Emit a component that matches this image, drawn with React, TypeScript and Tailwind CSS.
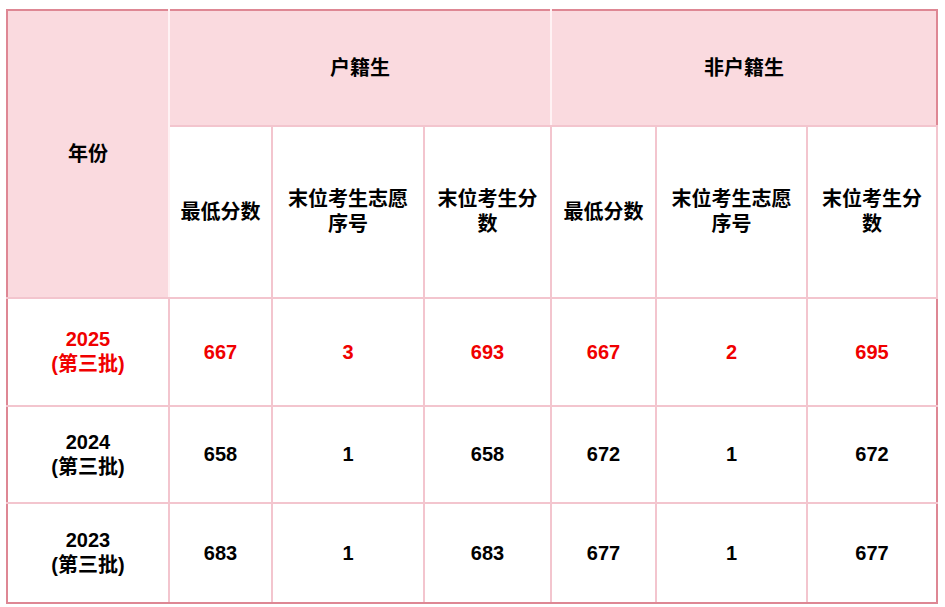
import React from "react";

const font = { fontFamily: '"Liberation Sans", Arial, "Noto Sans CJK SC", sans-serif' };

type Row = { year: string; vals: string[]; red?: boolean };

const rows: Row[] = [
  { year: "2025", vals: ["667", "3", "693", "667", "2", "695"], red: true },
  { year: "2024", vals: ["658", "1", "658", "672", "1", "672"] },
  { year: "2023", vals: ["683", "1", "683", "677", "1", "677"] },
];

const sub = ["最低分数", "末位考生志愿序号", "末位考生分数", "最低分数", "末位考生志愿序号", "末位考生分数"];

export default function App() {
  return (
    <div className="bg-white w-[945px] h-[607px] pt-[9px] pl-[6px]" style={font}>
      <table className="table-fixed border-collapse border-2 border-[#de8794] text-[20px] font-bold leading-[25px] text-black text-center w-[930px]">
        <colgroup>
          <col className="w-[162px]" />
          <col className="w-[103px]" />
          <col className="w-[152px]" />
          <col className="w-[127px]" />
          <col className="w-[105px]" />
          <col className="w-[151px]" />
          <col className="w-[130px]" />
        </colgroup>
        <tbody>
          <tr className="h-[116px] bg-[#fadadf]">
            <td rowSpan={2} className="bg-[#fadadf] border-2 border-[#f3c5ce] border-t-[#de8794] border-l-[#de8794] border-r-[#fff2f4] align-middle">
              年份
            </td>
            <td colSpan={3} className="border-2 border-[#f3c5ce] border-t-[#de8794] border-l-[#fff2f4] border-r-[#fff2f4]">
              户籍生
            </td>
            <td colSpan={3} className="border-2 border-[#f3c5ce] border-t-[#de8794] border-l-[#fff2f4] border-r-[#de8794]">
              非户籍生
            </td>
          </tr>
          <tr className="h-[172px] bg-white">
            {sub.map((s, i) => (
              <td key={i} className="bg-white border-2 border-[#f3c5ce] px-[8px]">
                {s}
              </td>
            ))}
          </tr>
          {rows.map((r, ri) => (
            <tr key={r.year} className={ri === 0 ? "h-[108px]" : ri === 1 ? "h-[97px]" : "h-[100px]"}>
              <td className={`border-2 border-[#f3c5ce] border-l-[#de8794] ${ri === 2 ? "border-b-[#de8794]" : ""} ${r.red ? "text-[#f00000]" : ""}`}>
                <div>{r.year}</div>
                <div>(第三批)</div>
              </td>
              {r.vals.map((v, i) => (
                <td
                  key={i}
                  className={`border-2 border-[#f3c5ce] ${ri === 2 ? "border-b-[#de8794]" : ""} ${i === 5 ? "border-r-[#de8794]" : ""} ${r.red ? "text-[#f00000]" : ""}`}
                >
                  {v}
                </td>
              ))}
            </tr>
          ))}
        </tbody>
      </table>
    </div>
  );
}
